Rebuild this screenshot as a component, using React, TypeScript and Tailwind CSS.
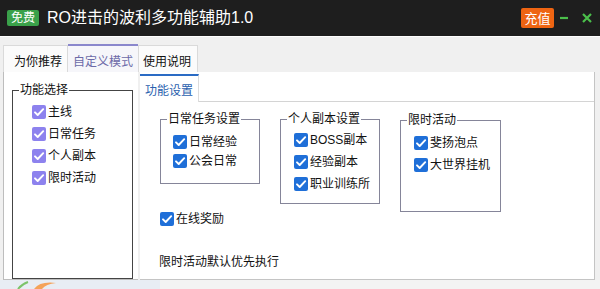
import type { ReactNode } from "react";

function Check({ tone = "blue" }: { tone?: "blue" | "purple" }) {
  return (
    <span
      className={`flex h-[14px] w-[14px] shrink-0 items-center justify-center rounded-[2px] ${
        tone === "purple" ? "bg-[#8d82ee]" : "bg-[#1f6fd8]"
      }`}
    >
      <svg viewBox="0 0 14 14" className="h-[14px] w-[14px]">
        <path d="M3 7.3l2.7 2.7L11.2 4.2" stroke="white" strokeWidth="1.9" fill="none" strokeLinecap="round" strokeLinejoin="round" />
      </svg>
    </span>
  );
}

function CheckRow({ label, tone, h }: { label: string; tone?: "blue" | "purple"; h: string }) {
  return (
    <div className={`flex items-center gap-[2px] ${h}`}>
      <Check tone={tone} />
      <span className="text-[12px] leading-[14px] text-[#111]">{label}</span>
    </div>
  );
}

// group box: border with the title sitting on the top edge
function Group({ title, className, children }: { title: string; className: string; children: ReactNode }) {
  return (
    <div className={`flex flex-col border ${className}`}>
      <span className="-mt-[8px] ml-[6px] w-fit bg-white px-[1px] text-[12px] leading-[14px] text-[#111]">{title}</span>
      {children}
    </div>
  );
}

export default function App() {
  return (
    <div className="flex h-[289px] w-[600px] flex-col overflow-hidden bg-[#f0f0f0] font-['Liberation_Sans','Noto_Sans_CJK_SC',sans-serif]">
      {/* title bar */}
      <div className="flex h-[36px] shrink-0 items-center bg-[#1e1e1e] pl-[7px] pr-[8px]">
        <span className="flex h-[16px] w-[32px] items-center justify-center rounded-[2px] bg-[#3aa14a] text-[12px] leading-[12px] text-white">
          免费
        </span>
        <span className="ml-[8px] text-[16px] leading-[20px] text-white">RO进击的波利多功能辅助1.0</span>
        <div className="ml-auto flex items-center">
          <span className="flex h-[20px] w-[33px] items-center justify-center rounded-[2px] bg-[#ee6412] text-[13px] leading-[13px] text-white">
            充值
          </span>
          <svg viewBox="0 0 10 10" className="ml-[5px] h-[10px] w-[10px]">
            <path d="M1 5h8" stroke="#4bbf4b" strokeWidth="2.2" />
          </svg>
          <svg viewBox="0 0 10 10" className="ml-[13px] h-[10px] w-[10px]">
            <path d="M1 1l8 8M9 1l-8 8" stroke="#4bbf4b" strokeWidth="2.2" />
          </svg>
        </div>
      </div>

      <div className="h-px bg-white" />

      {/* top tabs */}
      <div className="mt-[7px] flex h-[28px] items-end px-[3px]">
        <div className="h-[27px] w-[65px] border-x border-t border-[#dadada] bg-[#fbfbfb] pl-[10px] pt-[8px] text-[12px] leading-[16px] text-[#111]">
          为你推荐
        </div>
        <div className="h-[28px] w-[70px] border-t-2 border-[#8a87cc] bg-[#f6f6fa] pl-[5px] pt-[8px] text-[12px] leading-[16px] text-[#6c6aa8]">
          自定义模式
        </div>
        <div className="h-[27px] w-[60px] border-x border-t border-[#dadada] bg-[#fbfbfb] pl-[4px] pt-[8px] text-[12px] leading-[16px] text-[#111]">
          使用说明
        </div>
      </div>

      {/* content */}
      <div className="flex h-[208px] gap-[2px] px-[3px]">
        <div className="w-[135px] border-b border-l border-[#bdbdbd] bg-white pl-[8px] pt-[18px]">
          <Group title="功能选择" className="h-[189px] w-[121px] border-[#444]">
            <div className="pl-[19px] pt-[4px]">
              <CheckRow label="主线" tone="purple" h="h-[22px]" />
              <CheckRow label="日常任务" tone="purple" h="h-[22px]" />
              <CheckRow label="个人副本" tone="purple" h="h-[22px]" />
              <CheckRow label="限时活动" tone="purple" h="h-[22px]" />
            </div>
          </Group>
        </div>

        <div className="flex w-[455px] flex-col border-b border-r border-[#c4c4c4] bg-white pt-[2px]">
          <div className="flex h-[28px]">
            <div className="h-[28px] w-[59px] border-r border-t-2 border-r-[#dcdcdc] border-t-[#2a6bc4] pl-[5px] pt-[7px] text-[12px] leading-[16px] text-[#2a5fae]">
              功能设置
            </div>
            <div className="flex-1 border-b border-[#d4d4d4]" />
          </div>

          <div className="flex h-[110px] items-start gap-[20px] pl-[20px] pt-[17px]">
            <Group title="日常任务设置" className="h-[65px] w-[100px] border-[#858599]">
              <div className="pl-[12px] pt-[6px]">
                <CheckRow label="日常经验" h="h-[19px]" />
                <CheckRow label="公会日常" h="h-[19px]" />
              </div>
            </Group>
            <Group title="个人副本设置" className="h-[85px] w-[100px] border-[#858599]">
              <div className="pl-[13px] pt-[3px]">
                <CheckRow label="BOSS副本" h="h-[22px]" />
                <CheckRow label="经验副本" h="h-[22px]" />
                <CheckRow label="职业训练所" h="h-[22px]" />
              </div>
            </Group>
            <Group title="限时活动" className="mt-[1px] h-[92px] w-[101px] border-[#858599]">
              <div className="pl-[13px] pt-[5px]">
                <CheckRow label="斐扬泡点" h="h-[22px]" />
                <CheckRow label="大世界挂机" h="h-[22px]" />
              </div>
            </Group>
          </div>

          <div className="pl-[20px]">
            <CheckRow label="在线奖励" h="h-[14px]" />
          </div>

          <div className="mt-[28px] pl-[19px] text-[12px] leading-[16px] text-[#111]">限时活动默认优先执行</div>
        </div>
      </div>

      {/* bottom strip */}
      <div className="flex h-[9px]">
        <div className="w-[160px] bg-[#e8edf4]">
          <svg viewBox="0 0 60 9" className="ml-[12px] h-[9px] w-[60px]">
            <path d="M6 9 Q10 4 16 2" stroke="#7cc36a" strokeWidth="2" fill="none" />
            <path d="M22 9 Q28 1 44 3 Q34 4 30 9 Z" fill="#f5a35a" />
          </svg>
        </div>
        <div className="flex-1 bg-[#f3f3f3]" />
      </div>
    </div>
  );
}
